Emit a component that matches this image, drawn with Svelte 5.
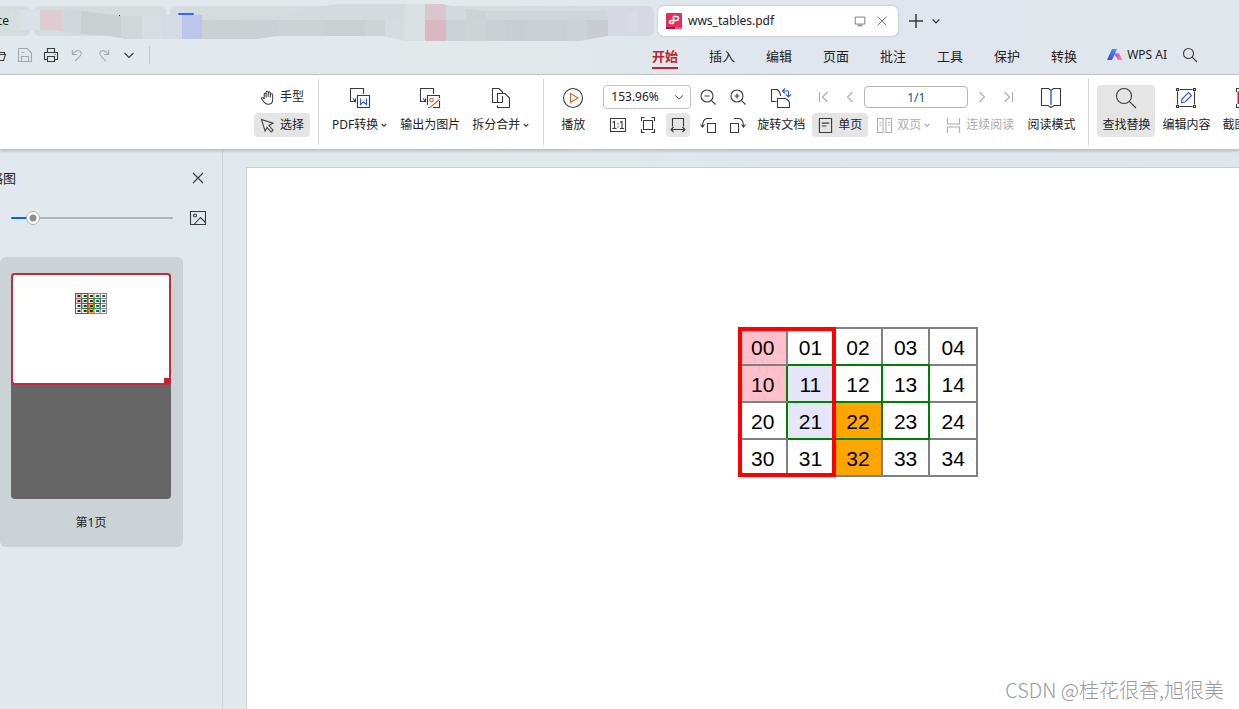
<script>
    const menus = ['开始', '插入', '编辑', '页面', '批注', '工具', '保护', '转换'];
    let activeMenu = $state('开始');
    let zoom = $state('153.96%');
    let pageNo = $state('1/1');
    let thumbSize = $state(10);

    // Table data in the document
    const rows = [0, 1, 2, 3];
    const cols = [0, 1, 2, 3, 4];
    const fills = {
        '00': 'pink',
        '10': 'pink',
        '11': 'lavender',
        '21': 'lavender',
        '22': 'orange',
        '32': 'orange'
    };

    function greenRight(r, c) {
        return (r === 1 || r === 2) && c < 4;
    }

    function greenBottom(r, c) {
        return r < 3 && c > 0 && c < 4;
    }

    // Blurred out tab titles: x, y, width, height, color
    const mosaic = [
        [10, 10, 10, 20, '#d7dee0'],
        [20, 10, 20, 20, '#dae1e8'],
        [40, 10, 21, 31, '#dfccd0'],
        [61, 10, 20, 31, '#d0d6d9'],
        [81, 10, 40, 31, '#c9d0d2'],
        [121, 10, 21, 31, '#d0d7d9'],
        [142, 10, 20, 31, '#d7dde1'],
        [162, 10, 20, 31, '#d5dbe3'],
        [182, 10, 20, 31, '#bdc6ea'],
        [202, 10, 122, 10, '#d4dbde'],
        [202, 20, 55, 21, '#c9d1d3'],
        [257, 20, 20, 21, '#cad1d5'],
        [277, 20, 47, 21, '#cbd3d4'],
        [324, 4, 81, 16, '#d4dbde'],
        [324, 20, 41, 21, '#c9d0d2'],
        [365, 20, 20, 21, '#ccd4d5'],
        [385, 20, 20, 21, '#d5dcdf'],
        [405, 4, 20, 37, '#d9e0e2'],
        [425, 4, 21, 16, '#d9c7ce'],
        [425, 20, 21, 21, '#dab8c2'],
        [446, 4, 20, 16, '#d3dadd'],
        [446, 20, 20, 21, '#cad2d5'],
        [466, 9, 20, 11, '#cbd3d5'],
        [466, 20, 20, 21, '#cdd4d6'],
        [486, 11, 121, 9, '#d0d7da'],
        [486, 20, 20, 21, '#cad0d3'],
        [506, 20, 20, 21, '#c8cfd2'],
        [526, 20, 41, 21, '#c9cfd3'],
        [567, 20, 20, 21, '#ccd3d6'],
        [587, 20, 21, 21, '#c9cdd2'],
        [628, 11, 10, 21, '#d9dce5']
    ];

    const icons = {
        open: '<path d="M1 3.500H6L7.500 5.500H13.500V7M1.500 13.500H12.500L14.500 7.500H5L1.500 13.500Z"/>',
        save: '<path d="M1.500 1.500H10L14.500 6V14.500H1.500ZM4.500 14V9.500H11.500V14M4.500 5.500H7.500"/>',
        print: '<path d="M4.500 5V1.500H11.500V5M4 12.500H1.500V5.500H14.500V12.500H12M4.500 9.500H11.500V14.500H4.500ZM11.500 7.500H12.500"/>',
        undo: '<path d="M2.500 2V7H7.500M2.500 7C5 3 11 1 12 5.500C12.500 8 8 11 5.500 14"/>',
        redo: '<path d="M13.500 2V7H8.500M13.500 7C11 3 5 1 4 5.500C3.500 8 8 11 10.500 14"/>',
        down: '<path d="M3.500 6L8 10.500L12.500 6"/>',
        search: '<circle cx="6.500" cy="6.500" r="5"/><path d="M10.200 10.200L15 15"/>',
        plus: '<path d="M8 1V15M1 8H15" stroke-width="1.500"/>',
        close: '<path d="M3 3L13 13M13 3L3 13"/>',
        screen: '<path d="M2.500 3.500H13.500V11.500H2.500ZM8 11.500V13.500M5 13.500H11"/>',
        hand: '<path d="M4.500 9.500V4.500C4.500 3 6.500 3 6.500 4.500V8V2.500C6.500 1 8.800 1 8.800 2.500V7.500V3C8.800 1.600 11 1.600 11 3V8V5C11 3.600 13.500 3.600 13.500 5V10C13.500 13 11.500 15.200 8.700 15.200C6 15.200 5 13.800 4 12.500L1.800 9.400C1.200 8.300 2.500 7.500 3.300 8.300L4.500 9.500"/>',
        cursor: '<path d="M1.500 1.500L14 5.500L9.500 8L14 13L12 15L7.500 10L5.500 14Z"/>',
        oneToOne: '<path d="M.500 1.500H15.500V14.500H.500ZM2.500 5.500L4.500 4.500V11.500M2.500 11.500H6.500M10 5.500L12 4.500V11.500M10 11.500H14"/><path d="M8 6V7.500M8 9V10.500" stroke="#2f5be0"/>',
        fitPage: '<path d="M3.500 3.500H12.500V12.500H3.500ZM1.500 4V.500H4.500M11.500 .500H14.500V4M1.500 12V15.500H4.500M11.500 15.500H14.500V12"/>',
        fitWidth: '<path d="M2.500 9.500V1.500H13.500V9.500M1 12.500H15M3.500 10L1 12.500L3.500 15M12.500 10L15 12.500L12.500 15"/>',
        zoomOut: '<circle cx="7" cy="7" r="6"/><path d="M4.500 7H9.500M11.300 11.300L15.500 15.500"/>',
        zoomIn: '<circle cx="7" cy="7" r="6"/><path d="M4.500 7H9.500M7 4.500V9.500M11.300 11.300L15.500 15.500"/>',
        rotateLeft: '<path d="M7.500 6.500H15.500V15.500H7.500ZM12 1.500H7Q2.500 2 2.500 10M.500 7.500L2.500 10L4.500 7.500"/>',
        rotateRight: '<path d="M.500 6.500H8.500V15.500H.500ZM4 1.500H9Q13.500 2 13.500 10M11.500 7.500L13.500 10L15.500 7.500"/>',
        first: '<path d="M3.500 3V13M11.500 3L6.500 8L11.500 13"/>',
        prev: '<path d="M10.500 3L5.500 8L10.500 13"/>',
        next: '<path d="M5.500 3L10.500 8L5.500 13"/>',
        last: '<path d="M12.500 3V13M4.500 3L9.500 8L4.500 13"/>',
        single: '<path d="M1.500 .500H14.500V15.500H1.500ZM4 5.500H12M4 8.500H9" stroke-width="1.200"/>',
        double: '<path d="M.500 .500H6.500V15.500H.500ZM9.500 .500H15.500V15.500H9.500ZM2.500 4.500H5M2.500 7.500H5M11.500 4.500H14M11.500 7.500H14"/>',
        continuous: '<path d="M1.500 0V6.500H14.500V0M1.500 16V9.500H14.500V16"/>',
        picture: '<path d="M.500 1.500H15.500V14.500H.500ZM4 14.500L10.500 7.500L15.500 12.500"/><circle cx="5" cy="5.500" r="1.500"/>',
        toWord: '<path d="M5.500 13.500H.500V.500H13.500V6M3 10.500L5.500 13.500V10.500"/><path d="M7.500 7.500H19.500V19.500H7.500Z"/><path d="M10.500 10.500V16.500L13.500 14L16.500 16.500V10.500" stroke="#2f5be0"/>',
        toImage: '<path d="M5.500 13.500H.500V.500H13.500V6M3 10.500L5.500 13.500V10.500M7.500 17V7.500H19.500V10M19.500 13V19.500H13"/><g stroke="#d9632b"><circle cx="11.500" cy="12" r="1.800"/><path d="M8 19.500H10L19.500 11.500"/></g>',
        split: '<path d="M6.500 14.500H1.500V.500H8L11.500 4V5.500M11.500 14.500H6.500V5.500H14L18.500 10V19.500H6.500V17.500M11.500 8V14.500"/>',
        play: '<circle cx="10" cy="10" r="9.500"/><path d="M7.500 5.500L15 10L7.500 14.500Z" stroke="#d9632b"/>',
        rotateDoc: '<path d="M5.500 13.500H.500V1.500H6Q9 3 9.500 8M6.500 19.500V10.500H14Q18 12 18.500 15V19.500Z"/><path d="M14 .500L11.500 3L14 5.500M11.500 3H17.500V8.500M15 6.500L17.500 9L20 6.500" stroke="#2f5be0"/>',
        book: '<path d="M10 2.500L7.500 .500H.500V17.500H7L10 19.500L13 17.500H19.500V.500H12.500L10 2.500"/><path d="M10 3V17" stroke="#2f5be0" stroke-width="1.400"/>',
        find: '<circle cx="8" cy="8" r="7.500"/><path d="M13.300 13.300L20 20"/>',
        edit: '<path d="M3.500 1.500H16.500M3.500 18.500H16.500M1.500 3.500V16.500M18.500 3.500V16.500"/><path d="M.500 .500H2.500V2.500H.500ZM17.500 .500H19.500V2.500H17.500ZM.500 17.500H2.500V19.500H.500ZM17.500 17.500H19.500V19.500H17.500Z"/><path d="M5.500 14.500L6 11L12.500 4.500L15.500 7.500L9 14Z" stroke="#2f5be0" stroke-width="1.200"/>',
        capture: '<path d="M.500 4V.500H4M.500 16V19.500H4M16 .500H19.500V4M16 19.500H19.500V16"/><path d="M2.500 15V4.500H10V15Z" stroke="#c8193c" stroke-width="2"/>'
    };
</script>

{#snippet icon(name, size = 16)}
    {@const box = size >= 20 ? 20 : 16}
    <svg class="icon" width={size} height={size} viewBox="0 0 {box} {box}" aria-hidden="true">
        {@html icons[name]}
    </svg>
{/snippet}

{#snippet big(name, label, more, cls)}
    <button class="big {cls}">
        {@render icon(name, 20)}
        <span class="label">
            {label}
            {#if more}{@render icon('down', 8)}{/if}
        </span>
    </button>
{/snippet}

<div class="app">
    <header>
        <div class="tabs">
            <button class="tab cut">ce</button>
            <button class="tab second" aria-label="tab"></button>
            <button class="tab third" aria-label="tab"></button>
            <div class="tab active">
                <svg width="16" height="16" viewBox="0 0 16 16" aria-hidden="true">
                    <rect width="16" height="16" rx="1" fill="#e0305a" />
                    <rect y="14" width="9" height="2" fill="#b01241" />
                    <rect x="9" y="14" width="7" height="2" fill="#ff5577" />
                    <path d="M7.500 10.500V3.500H10.500Q12.500 3.500 12.500 5.500T10.500 7.500H5.500Q3.500 7.500 3.500 9T5.500 10.500H7.500" fill="none" stroke="#fff" stroke-width="1.500" />
                </svg>
                <span class="name">wws_tables.pdf</span>
                {@render icon('screen', 14)}
                <button class="plain" aria-label="关闭">{@render icon('close', 14)}</button>
            </div>
            <button class="plain add" aria-label="新建">{@render icon('plus', 16)}</button>
            <button class="plain more" aria-label="更多">{@render icon('down', 12)}</button>
            <svg class="mosaic" width="654" height="42" aria-hidden="true">
                <clipPath id="smudge">
                    <path d="M10 10H75L90 12L121 16H142V15H202L222 20L300 12L335 4H442L452 6L466 8L482 11H654V36H607L580 41H405L382 36H277L257 39H125L110 36L81 34L61 31L52 30H10Z" />
                </clipPath>
                <g clip-path="url(#smudge)">
                    {#each mosaic as [x, y, w, h, color]}
                        <rect {x} {y} width={w} height={h} fill={color} />
                    {/each}
                </g>
                <rect x="178" y="13" width="16" height="2" rx="1" fill="#3b66f5" />
                <rect x="119" y="15" width="1" height="1" fill="#222" />
            </svg>
        </div>

        <div class="menubar">
            <div class="quick">
                <button aria-label="打开">{@render icon('open')}</button>
                <button class="dim" aria-label="保存">{@render icon('save')}</button>
                <button aria-label="打印">{@render icon('print')}</button>
                <button class="dim" aria-label="撤销">{@render icon('undo', 15)}</button>
                <button class="dim" aria-label="恢复">{@render icon('redo', 15)}</button>
                <button aria-label="更多">{@render icon('down')}</button>
            </div>
            <nav>
                {#each menus as menu}
                    <button class:current={menu === activeMenu} onclick={() => (activeMenu = menu)}>{menu}</button>
                {/each}
            </nav>
            <button class="plain ai">
                <svg width="16" height="14" viewBox="0 0 16 14" aria-hidden="true">
                    <defs>
                        <linearGradient id="aiBlue" x1="0" y1="1" x2="1" y2="0">
                            <stop offset="0" stop-color="#4a35f0" />
                            <stop offset="1" stop-color="#2aa8ff" />
                        </linearGradient>
                        <linearGradient id="aiPink" x1="0" y1="0" x2="1" y2="1">
                            <stop offset="0" stop-color="#c22cf0" />
                            <stop offset="1" stop-color="#ff9a8a" />
                        </linearGradient>
                    </defs>
                    <path d="M5 1H10L5 12H0Z" fill="url(#aiBlue)" />
                    <path d="M7 5.500H12L15.500 12H11Z" fill="url(#aiPink)" />
                </svg>
                WPS AI
            </button>
            <button class="plain" aria-label="搜索">{@render icon('search')}</button>
        </div>
    </header>

    <div class="ribbon">
        <div class="stack">
            <button class="small">{@render icon('hand', 15)}手型</button>
            <button class="small on">{@render icon('cursor', 15)}选择</button>
        </div>
        <div class="sep first"></div>
        {@render big('toWord', 'PDF转换', true, '')}
        {@render big('toImage', '输出为图片', false, '')}
        {@render big('split', '拆分合并', true, '')}
        <div class="sep play"></div>
        {@render big('play', '播放', false, '')}
        <div class="zoom">
            <div class="select">
                <select bind:value={zoom} aria-label="缩放">
                    <option>100%</option>
                    <option>153.96%</option>
                    <option>200%</option>
                </select>
                {@render icon('down', 14)}
            </div>
            <button aria-label="缩小">{@render icon('zoomOut')}</button>
            <button aria-label="放大">{@render icon('zoomIn')}</button>
            <button aria-label="实际大小">{@render icon('oneToOne')}</button>
            <button aria-label="适合页面">{@render icon('fitPage')}</button>
            <button class="on" aria-label="适合宽度">{@render icon('fitWidth')}</button>
            <button aria-label="向左旋转">{@render icon('rotateLeft')}</button>
            <button aria-label="向右旋转">{@render icon('rotateRight')}</button>
        </div>
        {@render big('rotateDoc', '旋转文档', false, 'narrow')}
        <div class="stack paging">
            <div class="line">
                <button class="step" aria-label="首页">{@render icon('first')}</button>
                <button class="step" aria-label="上一页">{@render icon('prev')}</button>
                <input type="text" bind:value={pageNo} aria-label="页码" />
                <button class="step" aria-label="下一页">{@render icon('next')}</button>
                <button class="step" aria-label="末页">{@render icon('last')}</button>
            </div>
            <div class="line views">
                <button class="small on">{@render icon('single', 15)}单页</button>
                <button class="small off">{@render icon('double', 15)}<span class="label">双页{@render icon('down', 8)}</span></button>
                <button class="small off">{@render icon('continuous', 15)}连续阅读</button>
            </div>
        </div>
        {@render big('book', '阅读模式', false, 'read')}
        <div class="sep last"></div>
        <div class="tools">
            {@render big('find', '查找替换', false, 'on')}
            {@render big('edit', '编辑内容', false, '')}
            {@render big('capture', '截图对比', false, '')}
        </div>
    </div>

    <main>
        <aside>
            <div class="head">
                <h2>缩略图</h2>
                <button class="plain" aria-label="关闭">{@render icon('close')}</button>
            </div>
            <div class="sizer">
                <input
                    type="range"
                    min="0"
                    max="100"
                    bind:value={thumbSize}
                    aria-label="缩略图大小"
                    style="--fill: {thumbSize}%"
                />
                <button class="plain" aria-label="图片">{@render icon('picture')}</button>
            </div>
            <div class="card">
                <div class="thumb">
                    <div class="view">
                        <svg width="32" height="22" viewBox="0 0 32 22" aria-hidden="true">
                            {#each rows as r}
                                {#each cols as c}
                                    <rect
                                        x={0.5 + c * 6.2}
                                        y={0.5 + r * 5}
                                        width="6.2"
                                        height="5"
                                        fill={fills[`${r}${c}`] ?? '#fff'}
                                        stroke="#8a8a8a"
                                    />
                                    <rect x={2.5 + c * 6.2} y={2 + r * 5} width="3" height="2" fill={c > 2 ? '#34507c' : '#3a2a20'} />
                                {/each}
                            {/each}
                            <path d="M6.700 5.500H25.300V15.500H6.700ZM6.700 10.500H25.300M19.100 5.500V15.500" fill="none" stroke="#1c8a1c" />
                            <rect x="0.500" y="0.500" width="12.400" height="20" fill="none" stroke="#d82030" />
                        </svg>
                    </div>
                </div>
                <span>第1页</span>
            </div>
        </aside>

        <section class="document">
            <div class="page">
                <div class="grid">
                    <table>
                        <tbody>
                            {#each rows as r}
                                <tr>
                                    {#each cols as c}
                                        <td
                                            class={fills[`${r}${c}`]}
                                            class:green-right={greenRight(r, c)}
                                            class:green-bottom={greenBottom(r, c)}>{r}{c}</td
                                        >
                                    {/each}
                                </tr>
                            {/each}
                        </tbody>
                    </table>
                    <div class="frame"></div>
                </div>
            </div>
        </section>
    </main>
    <div class="watermark">CSDN @桂花很香,旭很美</div>
</div>

<style>
    :global(body) {
        margin: 0;
        overflow: hidden;
    }

    .app {
        position: relative;
        display: flex;
        flex-direction: column;
        height: 100vh;
        overflow: hidden;
        font-family: "Noto Sans", "Noto Sans CJK SC", sans-serif;
        font-size: 12px;
        line-height: 18px;
        color: #222;
        background: linear-gradient(90deg, #e1e9ee 0%, #e1e9eb 45%, #e0e6ee 60%, #e1e5ec 100%);
        white-space: nowrap;
    }

    button,
    input,
    select {
        box-sizing: border-box;
        margin: 0;
        padding: 0;
        border: none;
        background: none;
        color: inherit;
        font: inherit;
    }

    button {
        flex-shrink: 0;
    }

    .icon {
        flex-shrink: 0;
        display: block;
        fill: none;
        stroke: #3a3a3a;
        stroke-width: 1.1;
        overflow: visible;
    }

    .plain {
        display: flex;
        align-items: center;
    }

    /* Tabs */
    .tabs {
        position: relative;
        display: flex;
        gap: 4px;
        height: 30px;
        padding-top: 6px;
    }

    .tab {
        box-sizing: border-box;
        border-radius: 6px;
        background: #d5dcde;
    }

    .cut {
        width: 30px;
        padding-right: 21px;
        display: flex;
        align-items: center;
        justify-content: flex-end;
        border-radius: 0 6px 6px 0;
    }

    .second {
        width: 132px;
    }

    .third {
        width: 484px;
        background: linear-gradient(90deg, #d5dcde 70%, #d6d9e3 95%);
    }

    .active {
        display: flex;
        align-items: center;
        width: 240px;
        padding: 0 9px 0 8px;
        background: #fff;
        box-shadow: 0 0 2px #9aa3ac;
    }

    .active .icon {
        stroke: #777;
    }

    .name {
        flex: 1;
        margin-left: 6px;
    }

    .active .plain {
        margin-left: 8px;
    }

    .add {
        margin: 0 2px 0 6px;
    }

    .more .icon {
        stroke-width: 1.8;
    }

    .mosaic {
        position: absolute;
        top: 0;
        left: 0;
        pointer-events: none;
    }

    /* Menu row */
    .menubar {
        display: flex;
        align-items: center;
        height: 38px;
        border-bottom: 1px solid #c6cacd;
    }

    .quick {
        display: flex;
        margin-left: -14px;
        padding-right: 7px;
        border-right: 1px solid #c3c9cc;
    }

    .quick button {
        display: flex;
        align-items: center;
        justify-content: center;
        width: 26px;
        height: 18px;
    }

    .dim .icon {
        stroke: #a3a8aa;
    }

    nav {
        display: flex;
        gap: 31px;
        margin: 0 30px 0 502px;
        font-size: 13px;
        line-height: 20px;
    }

    nav button {
        padding: 4px 0 1px;
        border-bottom: 2px solid transparent;
    }

    nav .current {
        color: #c02135;
        border-color: #c02135;
        font-weight: bold;
    }

    .ai {
        gap: 4px;
        margin-right: 15px;
    }

    /* Ribbon */
    .ribbon {
        display: flex;
        height: 60px;
        padding: 10px 0 4px 254px;
        background: #fff;
        border-bottom: 1px solid #bfc4c7;
        box-shadow: 0 1px 3px rgba(0, 0, 0, 0.2);
        z-index: 1;
    }

    .stack {
        display: flex;
        flex-direction: column;
        flex-shrink: 0;
        gap: 4px;
    }

    .small {
        display: flex;
        align-items: center;
        gap: 5px;
        height: 24px;
        padding: 0 6px;
        border-radius: 4px;
    }

    .on {
        background: #e5e5e5;
    }

    .off {
        color: #acacac;
    }

    .off .icon,
    .step .icon {
        stroke: #acacac;
    }

    .sep {
        flex-shrink: 0;
        width: 1px;
        height: 66px;
        margin: -6px 7px 0;
        background: #d6d6d6;
    }

    .sep.first {
        margin-left: 8px;
    }

    .sep.play {
        margin-right: 11px;
    }

    .sep.last {
        margin-right: 8px;
    }

    .big {
        box-sizing: border-box;
        display: flex;
        flex-direction: column;
        align-items: center;
        gap: 8px;
        height: 52px;
        padding: 3px 6px;
        border-radius: 4px;
    }

    .narrow {
        padding: 3px 4px;
    }

    .label {
        display: flex;
        align-items: center;
        gap: 2px;
    }

    .label .icon {
        stroke-width: 2.4;
    }

    .zoom {
        display: grid;
        grid-template-columns: repeat(5, 30px);
        grid-template-rows: 24px 24px;
        row-gap: 4px;
        margin-left: 12px;
        justify-items: center;
    }

    .zoom button {
        display: flex;
        align-items: center;
        justify-content: center;
        width: 24px;
        height: 24px;
        border-radius: 4px;
    }

    .select {
        display: grid;
        grid-column: span 3;
        justify-self: start;
        align-items: center;
        width: 88px;
    }

    .select select,
    .select > :global(svg) {
        grid-area: 1 / 1;
    }

    .select > :global(svg) {
        justify-self: end;
        margin-right: 5px;
        pointer-events: none;
    }

    select {
        appearance: none;
        width: 100%;
        height: 24px;
        padding-left: 7px;
        border: 1px solid #c0c0c0;
        border-radius: 4px;
    }

    .paging {
        margin: 0 1px 0 3px;
    }

    .line {
        display: flex;
        gap: 2px;
        height: 24px;
    }

    .views {
        gap: 3px;
    }

    .step {
        display: flex;
        align-items: center;
        justify-content: center;
        width: 24px;
    }

    .line input {
        width: 104px;
        height: 22px;
        margin-top: 1px;
        border: 1px solid #b5b5b5;
        border-radius: 4px;
        text-align: center;
        color: #17508f;
    }

    .tools {
        display: flex;
        gap: 2px;
    }

    .tools .big {
        padding: 3px 5px;
    }

    /* Workspace */
    main {
        display: flex;
        flex: 1;
        min-height: 0;
    }

    aside {
        flex-shrink: 0;
        box-sizing: border-box;
        width: 223px;
        border-right: 1px solid #cdd1d3;
    }

    .head,
    .sizer {
        display: flex;
        align-items: center;
        justify-content: space-between;
        height: 40px;
        padding-right: 16px;
    }

    .head {
        padding-top: 8px;
    }

    h2 {
        display: flex;
        justify-content: flex-end;
        width: 16px;
        margin: 0;
        overflow: hidden;
        font-size: 13px;
        font-weight: normal;
    }

    .sizer {
        padding-left: 11px;
    }

    input[type="range"] {
        appearance: none;
        width: 162px;
        height: 14px;
    }

    input[type="range"]::-webkit-slider-runnable-track {
        height: 2px;
        border-radius: 1px;
        background: linear-gradient(90deg, #1560cf var(--fill), #aeb5b9 var(--fill));
    }

    input[type="range"]::-webkit-slider-thumb {
        appearance: none;
        box-sizing: border-box;
        width: 14px;
        height: 14px;
        margin-top: -6px;
        border: 1px solid #b0b0b0;
        border-radius: 50%;
        background: radial-gradient(circle, #8c8c8c 3px, #fff 4px);
    }

    .card {
        display: flex;
        flex-direction: column;
        align-items: center;
        gap: 15px;
        width: 160px;
        margin-top: 19px;
        padding: 16px 12px 15px 11px;
        border-radius: 6px;
        background: #ccd3d6;
    }

    .thumb {
        width: 100%;
        height: 226px;
        border-radius: 4px;
        background: #666;
    }

    .view {
        position: relative;
        box-sizing: border-box;
        display: flex;
        justify-content: center;
        height: 112px;
        padding-top: 18px;
        border: 2px solid #bd2d3e;
        border-radius: 4px;
        background: #fff;
    }

    /* resize handle in the corner of the view box */
    .view::after {
        content: "";
        position: absolute;
        right: -1px;
        bottom: -1px;
        width: 6px;
        height: 6px;
        background: #c02135;
    }

    .document {
        flex: 1;
        min-width: 0;
        display: flex;
        overflow: hidden;
        padding: 17px 0 0 23px;
    }

    .page {
        display: flex;
        justify-content: center;
        align-items: flex-start;
        flex: 1 0 1222px;
        padding-top: 159px;
        background: #fff;
        border: 1px solid #c8ced2;
        border-bottom: none;
    }

    .grid {
        position: relative;
    }

    table {
        border-collapse: collapse;
        table-layout: fixed;
        width: 240px;
        font-family: "Liberation Sans", Arial, sans-serif;
        font-size: 21px;
        line-height: 33px;
        color: #000;
    }

    td {
        padding: 2px 0 0;
        border: 2px solid gray;
        text-align: center;
    }

    .pink {
        background: pink;
    }

    .lavender {
        background: lavender;
    }

    .orange {
        background: orange;
    }

    .green-right {
        border-right-color: green;
    }

    .green-bottom {
        border-bottom-color: green;
    }

    .frame {
        position: absolute;
        box-sizing: border-box;
        top: 0;
        left: 0;
        width: 98px;
        height: 100%;
        border: 4px solid red;
    }

    .watermark {
        position: absolute;
        right: 15px;
        bottom: 6px;
        font-family: "Noto Sans CJK SC", sans-serif;
        font-size: 20px;
        font-weight: 300;
        line-height: 26px;
        color: #999;
    }
</style>
